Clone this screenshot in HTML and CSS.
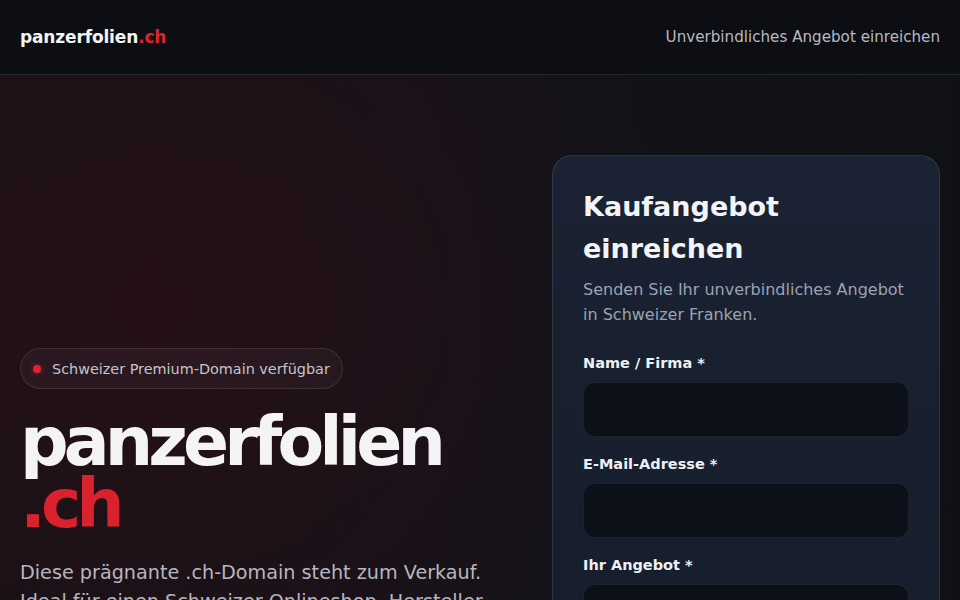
FILE: index.html
```html
<!DOCTYPE html>
<html lang="de">
<head>
<meta charset="utf-8">
<title>panzerfolien.ch</title>
<link rel="stylesheet" href="styles.css">
</head>
<body>
<header class="site-header">
  <a class="logo" href="#">panzerfolien<span class="tld">.ch</span></a>
  <a class="nav-link" href="#offer">Unverbindliches Angebot einreichen</a>
</header>
<main class="hero">
  <div class="hero-inner">
    <section class="intro">
      <div class="badge"><span class="dot"></span>Schweizer Premium-Domain verfügbar</div>
      <h1 class="title">panzerfolien<br><span class="tld">.ch</span></h1>
      <p class="lead">Diese prägnante .ch-Domain steht zum Verkauf. Ideal für einen Schweizer Onlineshop, Hersteller oder Installateur von Sicherheits- und Schutzfolien.</p>
    </section>
    <section class="card" id="offer">
      <h2 class="card-title">Kaufangebot einreichen</h2>
      <p class="card-sub">Senden Sie Ihr unverbindliches Angebot in Schweizer Franken.</p>
      <form class="form">
        <label class="field"><span class="label">Name / Firma *</span><input class="input" type="text"></label>
        <label class="field"><span class="label">E-Mail-Adresse *</span><input class="input" type="email"></label>
        <label class="field"><span class="label">Ihr Angebot *</span><input class="input" type="text"></label>
      </form>
    </section>
  </div>
</main>
</body>
</html>
```

FILE: styles.css
```css
* { box-sizing: border-box; }
html, body { margin: 0; padding: 0; }
body {
  font-family: "DejaVu Sans", sans-serif;
  background: #101116;
  color: #f3f4f6;
  min-height: 600px;
  overflow: hidden;
}
a { text-decoration: none; }

.site-header {
  height: 75px;
  display: flex;
  align-items: center;
  justify-content: space-between;
  padding: 0 20px;
  background: #0d0e13;
  border-bottom: 1px solid #262830;
}
.logo {
  font-weight: bold;
  font-size: 17px;
  color: #f3f4f6;
  letter-spacing: -0.15px;
}
.tld { color: #dc2430; }
.nav-link {
  font-size: 15.15px;
  color: #b5b9c2;
}

.hero {
  min-height: 525px;
  background:
    radial-gradient(ellipse 520px 420px at 170px 230px, rgba(60, 12, 24, 0.35), rgba(60, 12, 24, 0) 100%),
    linear-gradient(90deg, #1a1117 0%, #171218 45%, #111318 70%, #0f1115 100%);
}
.hero-inner {
  display: grid;
  grid-template-columns: 1fr 388px;
  column-gap: 44px;
  align-items: start;
  padding: 80px 20px 0 20px;
}

.intro { padding-top: 193px; }
.badge {
  display: inline-flex;
  align-items: center;
  gap: 11px;
  height: 41px;
  padding: 0 12px 0 12px;
  border-radius: 21px;
  border: 1px solid rgba(255, 255, 255, 0.1);
  background: rgba(255, 255, 255, 0.035);
  color: #c3c5cc;
  font-size: 14.4px;
}
.dot {
  width: 8px;
  height: 8px;
  border-radius: 50%;
  background: #e0232f;
  box-shadow: 0 0 6px rgba(224, 35, 47, 0.6);
}
.title {
  margin: 22px 0 0 0;
  font-size: 68px;
  line-height: 62px;
  font-weight: bold;
  letter-spacing: -0.072em;
  color: #f4f4f6;
}
.title .tld { color: #d9222d; }
.lead {
  margin: 23px 0 0 0;
  font-size: 19.2px;
  line-height: 29px;
  color: #b4b7bf;
}

.card {
  border-radius: 20px;
  border: 1px solid rgba(255, 255, 255, 0.1);
  background: linear-gradient(180deg, #1a2233 0%, #161e2c 100%);
  padding: 30px 30px 30px 30px;
  min-height: 520px;
}
.card-title {
  margin: 0;
  font-size: 27px;
  line-height: 42px;
  font-weight: bold;
  color: #f3f4f6;
}
.card-sub {
  margin: 7px 0 0 0;
  font-size: 16px;
  line-height: 25px;
  color: #9ca3b0;
}
.form {
  margin-top: 27px;
  display: flex;
  flex-direction: column;
  gap: 18px;
}
.field {
  display: flex;
  flex-direction: column;
  gap: 10px;
}
.label {
  font-size: 14.5px;
  font-weight: bold;
  line-height: 18px;
  color: #eef0f3;
}
.input {
  height: 55px;
  border-radius: 12px;
  border: 1px solid rgba(255, 255, 255, 0.08);
  background: #0c1019;
  width: 100%;
  outline: none;
}
```
